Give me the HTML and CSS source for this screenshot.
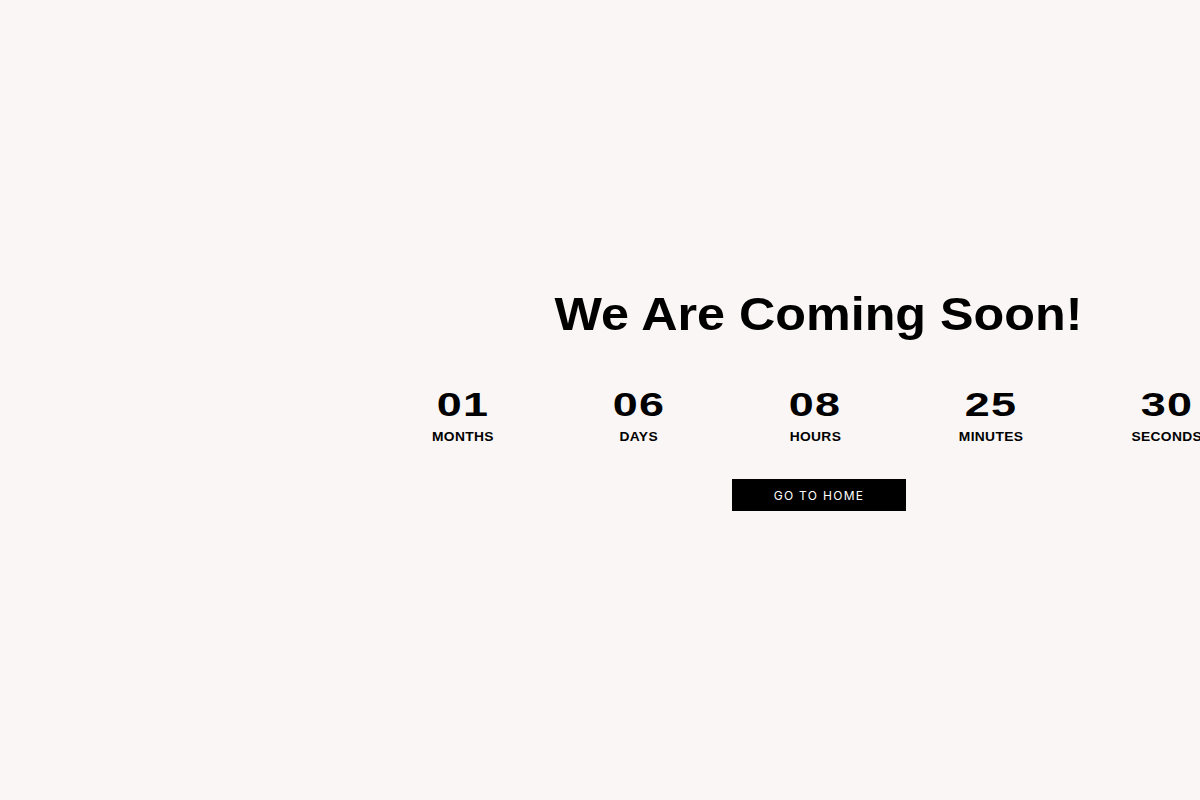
FILE: index.html
```html
<!DOCTYPE html>
<html lang="en">
<head>
<meta charset="utf-8">
<title>Coming Soon</title>
<link rel="stylesheet" href="styles.css">
</head>
<body>
<main class="page">
  <section class="hero">
    <h1 class="title"><span class="wide">We Are Coming Soon!</span></h1>
    <div class="countdown">
      <div class="unit"><span class="num">01</span><span class="label">MONTHS</span></div>
      <div class="unit"><span class="num">06</span><span class="label">DAYS</span></div>
      <div class="unit"><span class="num">08</span><span class="label">HOURS</span></div>
      <div class="unit"><span class="num">25</span><span class="label">MINUTES</span></div>
      <div class="unit"><span class="num">30</span><span class="label">SECONDS</span></div>
    </div>
    <a class="btn" href="#">GO TO HOME</a>
  </section>
</main>
</body>
</html>
```
FILE: styles.css
```css
html, body {
  margin: 0;
  padding: 0;
  background: #f9f6f5;
  overflow: hidden;
}
body {
  width: 1200px;
  height: 800px;
  font-family: "Liberation Sans", Arial, sans-serif;
  color: #000;
}
.page {
  height: 800px;
  display: flex;
  padding-left: 436px;
  box-sizing: border-box;
}
.hero {
  width: 764px;
  display: flex;
  flex-direction: column;
  align-items: center;
  padding-top: 286px;
}
.title {
  margin: 0;
  font-size: 46px;
  font-weight: 700;
  line-height: 56px;
  white-space: nowrap;
}
.wide {
  display: inline-block;
  transform: scaleX(1.093);
}
.countdown {
  display: flex;
  margin-top: 42px;
  margin-left: -6px;
}
.unit {
  width: 176px;
  flex: none;
  display: flex;
  flex-direction: column;
  align-items: center;
}
.num {
  font-size: 34px;
  font-weight: 700;
  line-height: 40px;
  display: inline-block;
  transform: scaleX(1.32);
  letter-spacing: 1px;
}
.label {
  margin-top: 6px;
  font-size: 12px;
  font-weight: 700;
  line-height: 14px;
  letter-spacing: 0.3px;
  display: inline-block;
  transform: scaleX(1.15);
}
.btn {
  margin-top: 35px;
  width: 174px;
  height: 32px;
  background: #000;
  color: #fff;
  text-decoration: none;
  display: flex;
  align-items: center;
  justify-content: center;
  font-family: "Inter", "Liberation Sans", sans-serif;
  font-size: 12px;
  letter-spacing: 1.3px;
  margin-left: 2px;
}
```
